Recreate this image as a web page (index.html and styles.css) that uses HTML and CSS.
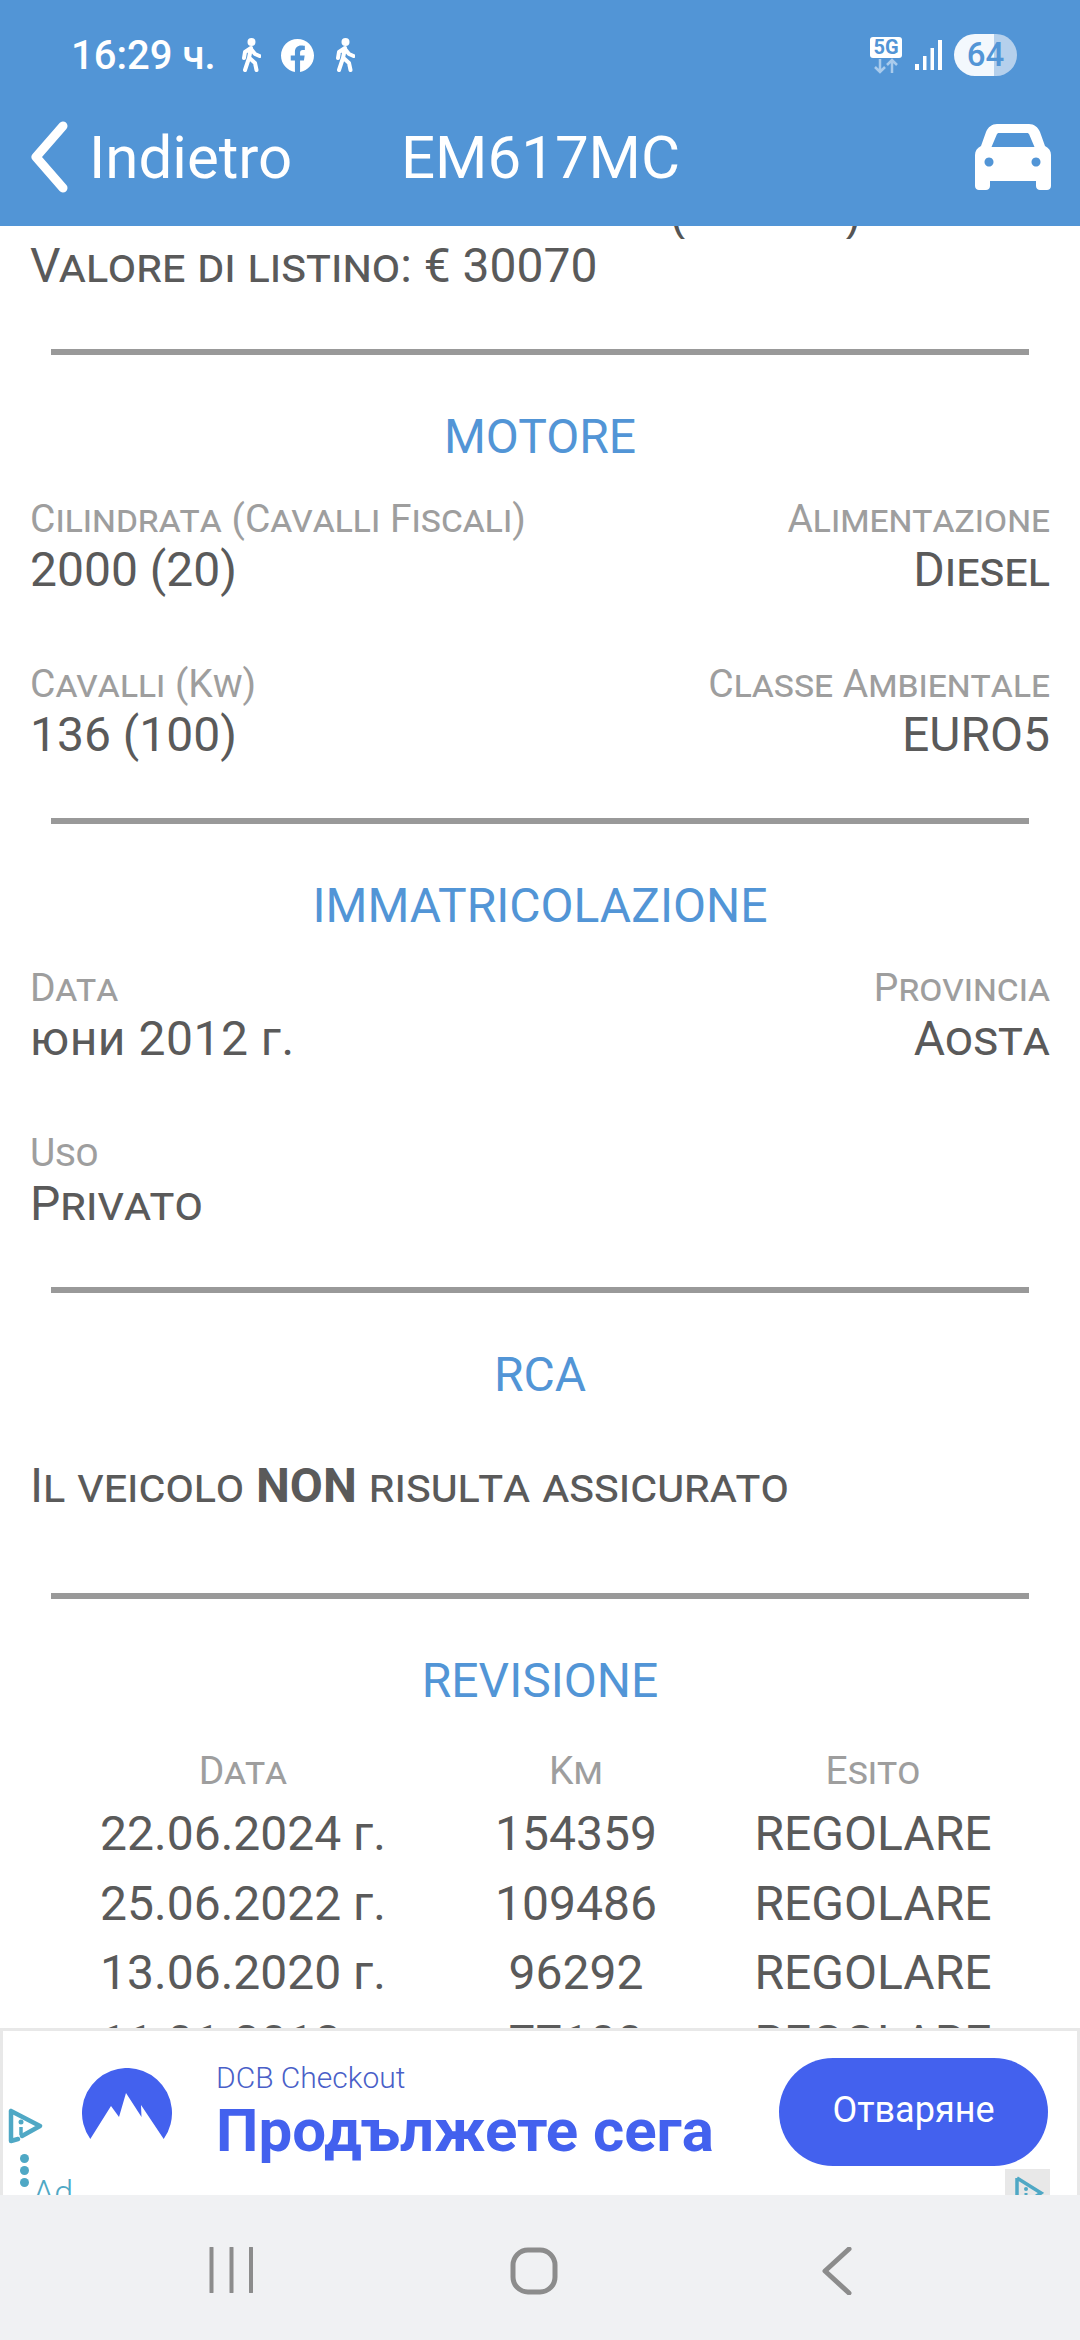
FILE: index.html
```html
<!DOCTYPE html>
<html lang="it">
<head>
  <meta charset="UTF-8">
  <meta name="viewport" content="width=device-width, initial-scale=1.0">
  <title>EM617MC</title>
  <link rel="stylesheet" href="styles.css">
</head>
<body>
  <div class="screen">
    <header class="top">
      <div class="status">
        <span class="clock">16:29 ч.</span>
        <svg class="walker" viewBox="0 0 20 34"><circle cx="10.5" cy="4" r="4" fill="#fff"/><path d="M10 10 L8 20 L4 32 M8.5 20 L14 25 L15.5 32 M10 10 L4 14 L3 20 M10 11 L14 16 L18.500 18" fill="none" stroke="#fff" stroke-width="4" stroke-linecap="round" stroke-linejoin="round"/></svg>
        <svg class="fb" viewBox="0 0 24 24"><path fill="#fff" d="M24 12.07C24 5.4 18.63 0 12 0S0 5.4 0 12.07c0 6.03 4.39 11.02 10.13 11.93v-8.44H7.08v-3.49h3.05V9.41c0-3.02 1.79-4.69 4.53-4.69 1.31 0 2.68.24 2.68.24v2.97h-1.51c-1.49 0-1.96.93-1.96 1.88v2.26h3.33l-.53 3.49h-2.8V24C19.61 23.09 24 18.1 24 12.07z"/></svg>
        <svg class="walker" viewBox="0 0 20 34"><circle cx="10.5" cy="4" r="4" fill="#fff"/><path d="M10 10 L8 20 L4 32 M8.5 20 L14 25 L15.5 32 M10 10 L4 14 L3 20 M10 11 L14 16 L18.500 18" fill="none" stroke="#fff" stroke-width="4" stroke-linecap="round" stroke-linejoin="round"/></svg>
        <div class="status-right">
          <div class="net">
            <span class="net-badge">5G</span>
            <svg class="net-arrows" viewBox="0 0 24 16"><path d="M6 1 V14 M1 9 L6 14 L11 9 M18 15 V2 M13 7 L18 2 L23 7" fill="none" stroke="#a9cbec" stroke-width="2.500"/></svg>
          </div>
          <svg class="signal" viewBox="0 0 27 30"><path fill="#fff" d="M0 24h4v6H0zM8 16h3.500v14H8zM15.500 8H19v22h-3.500zM23 0h4v30h-4z"/></svg>
          <span class="battery">64</span>
        </div>
      </div>
      <div class="toolbar">
        <div class="back">
          <svg class="back-icon" viewBox="0 0 38 72"><path d="M33 5 L6 36 L33 67" fill="none" stroke="#fff" stroke-width="9" stroke-linecap="round" stroke-linejoin="round"/></svg>
          <span>Indietro</span>
        </div>
        <div class="plate">EM617MC</div>
        <svg class="car" viewBox="0 0 76 66"><path fill="#fff" fill-rule="evenodd" d="M22 0H54C59 0 63 3 65 8L70 22C74 24 76 27 76 31V62C76 64.500 74 66 72 66H65C63 66 61 64.500 61 62V57H15V62C15 64.500 13 66 11 66H4C2 66 0 64.500 0 62V31C0 27 2 24 6 22L11 8C13 3 17 0 22 0ZM24 9C23 9 22.500 9.500 22 10L16.500 23H59.500L54 10C53.500 9.500 53 9 52 9ZM14 33.500a4.500 4.500 0 1 0 .01 0ZM61 33.500a4.500 4.500 0 1 0 .01 0Z"/></svg>
      </div>
    </header>

    <main class="content">
      <div class="cut-line"><span class="cut-text">(<span class="cut-gap"></span>)</span></div>
      <p class="value">Valore di listino: € 30070</p>

      <section class="block">
        <h2 class="block-title">MOTORE</h2>
        <div class="fields">
          <div class="field"><div class="label">Cilindrata (Cavalli Fiscali)</div><div class="value">2000 (20)</div></div>
          <div class="field field-right"><div class="label">Alimentazione</div><div class="value">Diesel</div></div>
          <div class="field"><div class="label">Cavalli (Kw)</div><div class="value">136 (100)</div></div>
          <div class="field field-right"><div class="label">Classe Ambientale</div><div class="value">EURO5</div></div>
        </div>
      </section>

      <section class="block">
        <h2 class="block-title">IMMATRICOLAZIONE</h2>
        <div class="fields">
          <div class="field"><div class="label">Data</div><div class="value value-plain">юни 2012 г.</div></div>
          <div class="field field-right"><div class="label">Provincia</div><div class="value">Aosta</div></div>
          <div class="field"><div class="label">Uso</div><div class="value">Privato</div></div>
        </div>
      </section>

      <section class="block">
        <h2 class="block-title">RCA</h2>
        <p class="value insurance">Il veicolo <b>NON</b> risulta assicurato</p>
      </section>

      <section class="block">
        <h2 class="block-title">REVISIONE</h2>
        <div class="checks">
          <div class="check-head">Data</div><div class="check-head">Km</div><div class="check-head">Esito</div>
          <div>22.06.2024 г.</div><div>154359</div><div>REGOLARE</div>
          <div>25.06.2022 г.</div><div>109486</div><div>REGOLARE</div>
          <div>13.06.2020 г.</div><div>96292</div><div>REGOLARE</div>
          <div>11.01.2018 г.</div><div>77100</div><div>REGOLARE</div>
        </div>
      </section>
    </main>

    <aside class="ad">
      <svg class="ad-logo" viewBox="0 0 90 72"><path fill="#4361ee" d="M8.300 71A45 45 0 1 1 81.700 71L59 37L59.500 49L44 25L37 49L29 38Z"/></svg>
      <div class="ad-text">
        <div class="ad-brand">DCB Checkout</div>
        <div class="ad-headline">Продължете сега</div>
      </div>
      <div class="ad-button">Отваряне</div>
      <svg class="ad-play" viewBox="0 0 36 36"><path d="M3 3 L32 18 L14 28 M3 3 V33 L10 31" fill="none" stroke="#4fa8c5" stroke-width="4.500" stroke-linejoin="round" stroke-linecap="round"/><circle cx="13" cy="14" r="2.500" fill="#4fa8c5"/><path d="M13 19 V27" stroke="#4fa8c5" stroke-width="3.500"/></svg>
      <div class="ad-dots"><i></i><i></i><i></i></div>
      <span class="ad-mark">Ad</span>
      <div class="ad-corner">
        <svg viewBox="0 0 30 36"><path d="M3 3 L27 18 L12 28 M3 3 V33" fill="none" stroke="#4fa8c5" stroke-width="3.500"/><circle cx="12" cy="14" r="2" fill="#4fa8c5"/><path d="M12 18 V26" stroke="#4fa8c5" stroke-width="3"/></svg>
      </div>
    </aside>

    <nav class="navbar">
      <svg class="nav-recent" viewBox="0 0 44 46"><path d="M2.500 1V45M22.500 1V45M42 1V45" fill="none" stroke="#8c8c8c" stroke-width="4" stroke-linecap="round"/></svg>
      <svg class="nav-home" viewBox="0 0 48 48"><rect x="3" y="3" width="42" height="42" rx="15" fill="none" stroke="#8c8c8c" stroke-width="5"/></svg>
      <svg class="nav-back" viewBox="0 0 30 48"><path d="M27 2 L3 24 L27 46" fill="none" stroke="#8c8c8c" stroke-width="5" stroke-linecap="round" stroke-linejoin="round"/></svg>
    </nav>
  </div>
</body>
</html>
```

FILE: styles.css
```css
* {
  box-sizing: border-box;
}
html, body {
  margin: 0;
  padding: 0;
}
body {
  font-family: Roboto, "Liberation Sans", sans-serif;
  background: #fff;
  color: #555;
}
.screen {
  width: 1080px;
  height: 2340px;
  display: flex;
  flex-direction: column;
  overflow: hidden;
}

/* top bar */
.top {
  flex: none;
  height: 226px;
  background: #5295d6;
  color: #fff;
}
.status {
  height: 110px;
  padding: 0 63px 0 71px;
  display: flex;
  align-items: center;
}
.clock {
  font-size: 40px;
  font-weight: 500;
  width: 170px;
}
.walker {
  width: 20px;
  height: 34px;
}
.fb {
  width: 33px;
  height: 33px;
  margin: 0 21px 0 20px;
}
.status-right {
  margin-left: auto;
  display: flex;
  align-items: center;
}
.net {
  width: 32px;
  display: flex;
  flex-direction: column;
  align-items: center;
}
.net-badge {
  width: 32px;
  height: 21px;
  background: #fff;
  border-radius: 3px;
  color: #5295d6;
  font-size: 20px;
  font-weight: 700;
  line-height: 21px;
  text-align: center;
}
.net-arrows {
  width: 24px;
  height: 16px;
}
.signal {
  width: 27px;
  height: 30px;
  margin: 0 12px 0 13px;
}
.battery {
  width: 63px;
  height: 42px;
  border-radius: 21px;
  background: linear-gradient(90deg, #f3f8fd 0 63%, #b5d0ec 63%);
  color: #5295d6;
  font-size: 33px;
  font-weight: 500;
  line-height: 42px;
  text-align: center;
}
.toolbar {
  height: 94px;
  padding: 0 29px 0 30px;
  display: grid;
  grid-template-columns: 1fr auto 1fr;
  align-items: center;
}
.back {
  display: flex;
  align-items: center;
  gap: 21px;
  font-size: 60px;
}
.back-icon {
  width: 38px;
  height: 72px;
}
.plate {
  font-size: 60px;
}
.car {
  justify-self: end;
  width: 76px;
  height: 66px;
}

/* scrolled content */
.content {
  flex: 1;
  min-height: 0;
  overflow: hidden;
}
.cut-line {
  height: 13px;
  overflow: hidden;
  display: flex;
  align-items: flex-end;
  padding-left: 670px;
  font-size: 48px;
  line-height: 1;
  color: #555;
}
.cut-gap {
  display: inline-block;
  width: 158px;
}
.value {
  margin: 0;
  font-size: 48px;
  line-height: 54px;
  font-variant: small-caps;
  color: #5a5a5a;
}
.content > .value {
  padding: 0 30px;
}
.value-plain {
  font-variant: normal;
  letter-spacing: .5px;
}
.block {
  margin: 55.500px 51px 0;
  border-top: 6px solid #999;
}
.block-title {
  margin: 52.500px 0 0;
  font-size: 48px;
  font-weight: 400;
  line-height: 60px;
  text-align: center;
  color: #5295d6;
}
.fields {
  margin: 28px -21px 0;
  display: grid;
  grid-template-columns: 1fr 1fr;
  row-gap: 63px;
}
.field-right {
  text-align: right;
}
.label {
  font-size: 39px;
  line-height: 48px;
  font-variant: small-caps;
  white-space: nowrap;
  color: #9e9e9e;
}
.insurance {
  margin: 54px -21px 0;
  padding-bottom: 24px;
}
.insurance b {
  font-weight: 700;
}
.checks {
  margin: 32px -21px 0;
  display: grid;
  grid-template-columns: 426px 240px 354px;
  grid-template-rows: 56px;
  grid-auto-rows: 69.500px;
  font-size: 48px;
  line-height: 69px;
  text-align: center;
  color: #5a5a5a;
}
.check-head {
  font-size: 39px;
  line-height: 57px;
  font-variant: small-caps;
  color: #9e9e9e;
}

/* ad banner */
.ad {
  flex: none;
  position: relative;
  height: 167px;
  padding: 27px 29px 0 79px;
  background: #fff;
  border: 3px solid #e8e8e8;
  border-bottom: 0;
  display: flex;
  align-items: flex-start;
  overflow: hidden;
}
.ad-logo {
  flex: none;
  width: 90px;
  height: 72px;
  margin-top: 10px;
}
.ad-text {
  margin: 3px 0 0 44px;
}
.ad-brand {
  font-size: 30px;
  font-weight: 300;
  line-height: 34px;
  color: #4a5fc8;
}
.ad-headline {
  margin-top: 3px;
  font-size: 60px;
  font-weight: 700;
  line-height: 66px;
  color: #4361ee;
  white-space: nowrap;
}
.ad-button {
  margin-left: auto;
  width: 269px;
  height: 108px;
  border-radius: 54px;
  background: #4361ee;
  color: #fff;
  font-size: 36px;
  line-height: 104px;
  text-align: center;
}
.ad-play {
  position: absolute;
  left: 5px;
  top: 77px;
  width: 36px;
  height: 36px;
}
.ad-dots {
  position: absolute;
  left: 17px;
  top: 123px;
  display: flex;
  flex-direction: column;
  gap: 3px;
}
.ad-dots i {
  display: block;
  width: 9px;
  height: 9px;
  border-radius: 50%;
  background: #4fa8c5;
}
.ad-mark {
  position: absolute;
  left: 30px;
  top: 141px;
  font-size: 34px;
  font-weight: 300;
  line-height: 40px;
  color: #4fa8c5;
}
.ad-corner {
  position: absolute;
  right: 27px;
  top: 138px;
  width: 45px;
  height: 29px;
  padding: 6px 0 0 9px;
  background: #e8e8e8;
}
.ad-corner svg {
  display: block;
  width: 30px;
  height: 36px;
}

/* android nav */
.navbar {
  flex: none;
  height: 145px;
  padding: 52px 0 0 209px;
  background: #f0f1f3;
  display: flex;
  align-items: flex-start;
}
.nav-recent {
  width: 44px;
  height: 46px;
}
.nav-home {
  width: 48px;
  height: 48px;
  margin-left: 257px;
}
.nav-back {
  width: 30px;
  height: 48px;
  margin-left: 264px;
}
```
